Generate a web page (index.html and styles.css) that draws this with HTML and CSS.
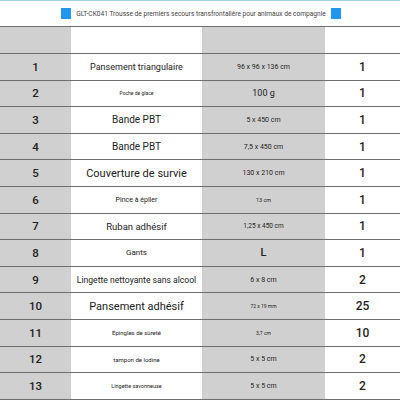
FILE: index.html
```html
<!DOCTYPE html>
<html>
<head>
<meta charset="utf-8">
<link rel="stylesheet" href="styles.css">
</head>
<body>
<div class="sheet">
  <div class="title">
    <span class="sq"></span>
    <span class="ttl">GLT-CK041 Trousse de premiers secours transfrontalière pour animaux de compagnie</span>
    <span class="sq"></span>
  </div>
  <div class="row head"><div class="c g"></div><div class="c"></div><div class="c g"></div><div class="c"></div></div>
  <div class="row"><div class="c g n">1</div><div class="c s9">Pansement triangulaire</div><div class="c g s7">96 x 96 x 136 cm</div><div class="c q">1</div></div>
  <div class="row"><div class="c g n">2</div><div class="c s5">Poche de glace</div><div class="c g s9">100 g</div><div class="c q">1</div></div>
  <div class="row"><div class="c g n">3</div><div class="c s10">Bande PBT</div><div class="c g s7">5 x 450 cm</div><div class="c q">1</div></div>
  <div class="row"><div class="c g n">4</div><div class="c s10">Bande PBT</div><div class="c g s7">7,5 x 450 cm</div><div class="c q">1</div></div>
  <div class="row"><div class="c g n">5</div><div class="c s11">Couverture de survie</div><div class="c g s7">130 x 210 cm</div><div class="c q">1</div></div>
  <div class="row"><div class="c g n">6</div><div class="c s7">Pince à épiler</div><div class="c g s55">13 cm</div><div class="c q">1</div></div>
  <div class="row"><div class="c g n">7</div><div class="c s95">Ruban adhésif</div><div class="c g s65">1,25 x 450 cm</div><div class="c q">1</div></div>
  <div class="row"><div class="c g n">8</div><div class="c s8">Gants</div><div class="c g s11b">L</div><div class="c q">1</div></div>
  <div class="row"><div class="c g n">9</div><div class="c s85">Lingette nettoyante sans alcool</div><div class="c g s7">6 x 8 cm</div><div class="c q">2</div></div>
  <div class="row"><div class="c g n">10</div><div class="c s11">Pansement adhésif</div><div class="c g s5">72 x 19 mm</div><div class="c q">25</div></div>
  <div class="row"><div class="c g n">11</div><div class="c s6">Épingles de sûreté</div><div class="c g s5">3,7 cm</div><div class="c q">10</div></div>
  <div class="row"><div class="c g n">12</div><div class="c s6">tampon de lodine</div><div class="c g s7">5 x 5 cm</div><div class="c q">2</div></div>
  <div class="row"><div class="c g n">13</div><div class="c s55">Lingette savonneuse</div><div class="c g s7">5 x 5 cm</div><div class="c q">2</div></div>
  <div class="row"><div class="c g"></div><div class="c"></div><div class="c g"></div><div class="c"></div></div>
</div>
</body>
</html>
```
FILE: styles.css
```css
html, body {
  margin: 0;
  padding: 0;
  background: #ffffff;
}
body {
  font-family: Roboto, "Noto Sans", sans-serif;
  color: #222222;
  width: 400px;
  height: 400px;
  overflow: hidden;
}
.sheet {
  display: flex;
  flex-direction: column;
  border-top: 1px solid #a9d3e6;
  height: 400px;
  box-sizing: border-box;
  overflow: hidden;
}
.title {
  height: 25px;
  flex: none;
  display: flex;
  align-items: center;
  justify-content: center;
  gap: 5px;
  padding-left: 2px;
}
.sq {
  width: 10px;
  height: 11px;
  background: #2196f0;
  flex: none;
}
.ttl {
  font-size: 6.6px;
  color: #444444;
  white-space: nowrap;
}
.row {
  display: grid;
  grid-template-columns: 71px 131px 123px 1fr;
  height: 26.6px;
  flex: none;
  border-top: 1.5px solid #6e6e6e;
  box-sizing: border-box;
}
.row.head {
  height: 27px;
}
.c {
  display: flex;
  align-items: center;
  justify-content: center;
  white-space: nowrap;
  text-align: center;
}
.g { background: #d0d0d0; }
.n { font-size: 11.5px; font-weight: 500; }
.q { font-size: 12px; font-weight: 500; }
.s5 { font-size: 5px; }
.s55 { font-size: 5.5px; }
.s6 { font-size: 6px; }
.s65 { font-size: 6.5px; }
.s7 { font-size: 7px; }
.s8 { font-size: 8px; }
.s85 { font-size: 8.6px; }
.s9 { font-size: 9px; }
.s95 { font-size: 9.5px; }
.s10 { font-size: 10px; }
.s11 { font-size: 11px; }
.s11b { font-size: 11px; font-weight: 500; }
```
